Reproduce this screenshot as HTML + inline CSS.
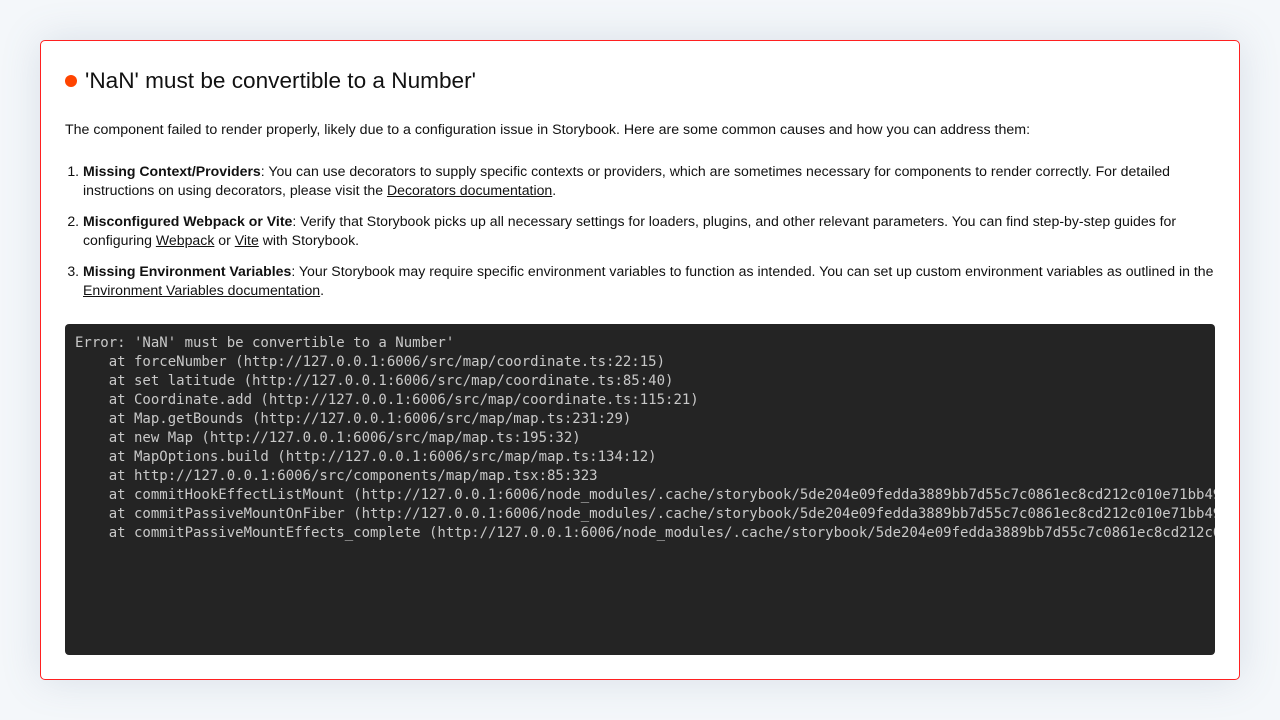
<!DOCTYPE html>
<html><head><meta charset="utf-8"><style>
body{margin:0;width:1280px;height:720px;background:#f4f7fa;font-family:"Liberation Sans",sans-serif;color:#111;overflow:hidden}
.card{position:absolute;left:40px;top:40px;width:1198px;height:638px;border:1px solid #ff2020;border-radius:5px;background:#fff;box-shadow:0 0 40px rgba(100,120,150,.18)}
h1{position:absolute;left:24px;top:26px;margin:0;font-weight:normal;font-size:22.6px;line-height:28px;display:flex;align-items:center}
h1 .dot{width:12px;height:12px;border-radius:50%;background:#ff4400;margin-right:8px}
.p{position:absolute;left:24px;top:79px;font-size:14.2px;line-height:20px;white-space:nowrap}
ol{position:absolute;left:24px;top:121px;margin:0;padding-left:18px;width:1180px;font-size:14.1px;line-height:19px;white-space:nowrap}
li{margin-bottom:12px}
a{color:#111;text-decoration:underline}
pre{position:absolute;left:24px;top:283px;width:1140px;height:321px;margin:0;background:#242424;border-radius:4px;color:#c8c8c8;font-family:"DejaVu Sans Mono",monospace;font-size:14px;line-height:19px;padding:10px 0 0 10px;overflow:hidden;white-space:pre}
</style></head><body>
<div class="card">
<h1><span class="dot"></span>'NaN' must be convertible to a Number'</h1>
<div class="p">The component failed to render properly, likely due to a configuration issue in Storybook. Here are some common causes and how you can address them:</div>
<ol>
<li><b>Missing Context/Providers</b>: You can use decorators to supply specific contexts or providers, which are sometimes necessary for components to render correctly. For detailed<br>instructions on using decorators, please visit the <a>Decorators documentation</a>.</li>
<li><b>Misconfigured Webpack or Vite</b>: Verify that Storybook picks up all necessary settings for loaders, plugins, and other relevant parameters. You can find step-by-step guides for<br>configuring <a>Webpack</a> or <a>Vite</a> with Storybook.</li>
<li><b>Missing Environment Variables</b>: Your Storybook may require specific environment variables to function as intended. You can set up custom environment variables as outlined in the<br><a>Environment Variables documentation</a>.</li>
</ol>
<pre>Error: 'NaN' must be convertible to a Number'
    at forceNumber (http://127.0.0.1:6006/src/map/coordinate.ts:22:15)
    at set latitude (http://127.0.0.1:6006/src/map/coordinate.ts:85:40)
    at Coordinate.add (http://127.0.0.1:6006/src/map/coordinate.ts:115:21)
    at Map.getBounds (http://127.0.0.1:6006/src/map/map.ts:231:29)
    at new Map (http://127.0.0.1:6006/src/map/map.ts:195:32)
    at MapOptions.build (http://127.0.0.1:6006/src/map/map.ts:134:12)
    at http://127.0.0.1:6006/src/components/map/map.tsx:85:323
    at commitHookEffectListMount (http://127.0.0.1:6006/node_modules/.cache/storybook/5de204e09fedda3889bb7d55c7c0861ec8cd212c010e71bb49
    at commitPassiveMountOnFiber (http://127.0.0.1:6006/node_modules/.cache/storybook/5de204e09fedda3889bb7d55c7c0861ec8cd212c010e71bb49
    at commitPassiveMountEffects_complete (http://127.0.0.1:6006/node_modules/.cache/storybook/5de204e09fedda3889bb7d55c7c0861ec8cd212c0</pre>
</div>
</body></html>
